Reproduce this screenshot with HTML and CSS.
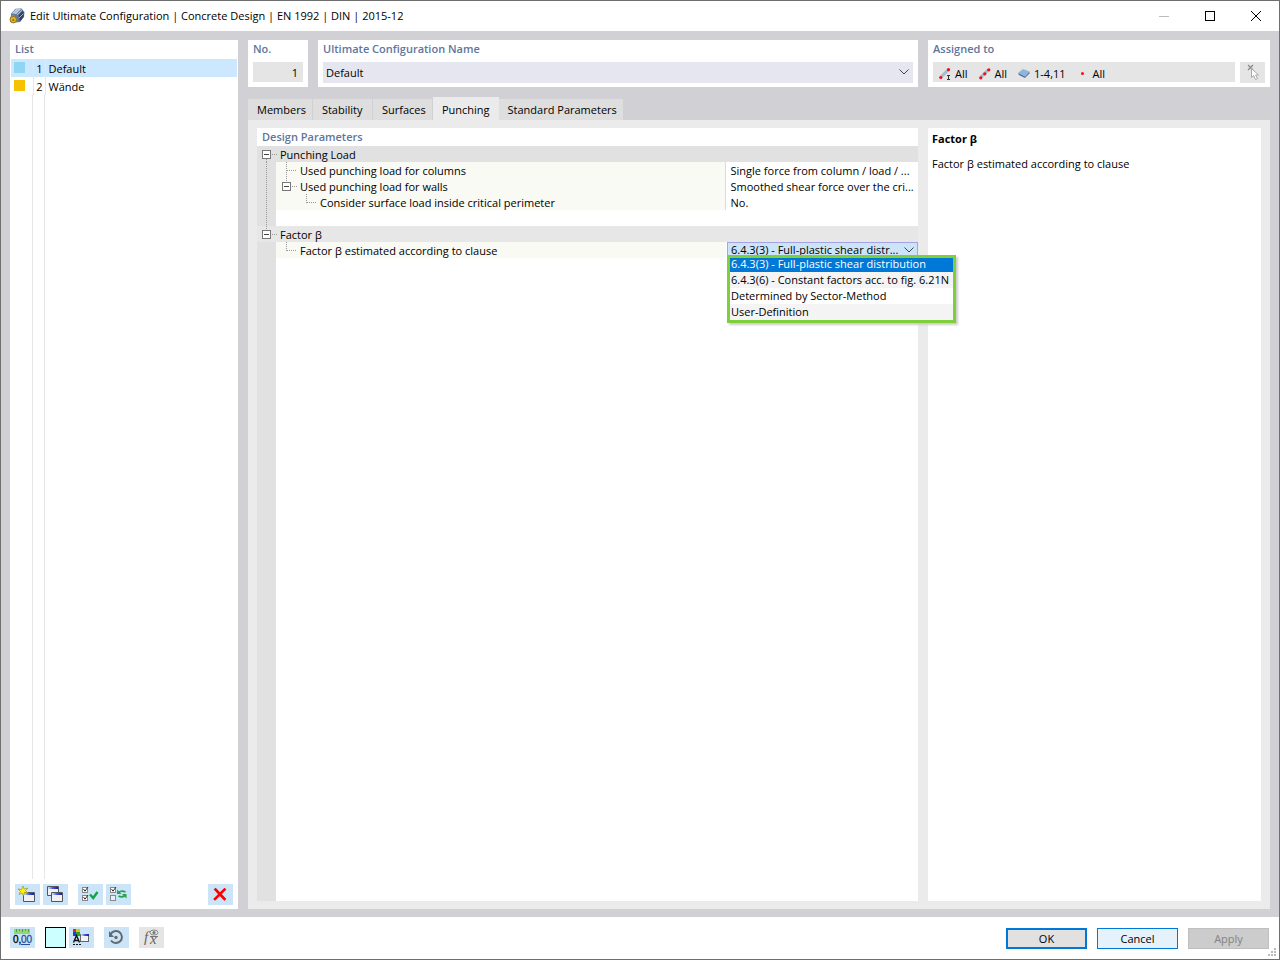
FILE: index.html
```html
<!DOCTYPE html>
<html lang="en">
<head>
<meta charset="utf-8">
<title>Edit Ultimate Configuration</title>
<link rel="stylesheet" href="styles.css">
</head>
<body>
<svg class="defs" width="0" height="0" aria-hidden="true">
  <defs>
    <linearGradient id="bar"><stop offset="0" stop-color="#dfe4f2"/><stop offset=".5" stop-color="#3a55e8"/><stop offset="1" stop-color="#1220a8"/></linearGradient>
    <g id="win">
      <path d="M.5.500h11v9h-11z" fill="#f1f0f2" stroke="#55555a"/>
      <rect x="1" y="1" width="10" height="2" fill="url(#bar)"/>
    </g>
    <g id="check">
      <rect x=".5" y=".5" width="5" height="5" fill="#fff" stroke="#888"/>
      <path d="M1.500 2 3 4.200 6 0" fill="none" stroke="#333"/>
    </g>
    <g id="minus">
      <rect x="5.500" y="4.500" width="8" height="8" fill="#fff" stroke="#777"/>
      <path d="M7 8.500h5" stroke="#444"/>
    </g>
  </defs>
</svg>
<div class="window">
  <header class="titlebar">
    <svg class="app-icon" width="16" height="16" viewBox="0 0 16 16" aria-hidden="true">
      <path d="M2 5.500 6.500.800l6-.3 3 3.500-.5 5-4 5-4 .5L2 9z" fill="#62799f"/>
      <path d="M2.500 5.500 7 1l5.500-.2-5 5.200z" fill="#a9bdd8"/>
      <path d="M9.500 7.500 13.500 3l1.500 2-.5 4-3.500 4.500z" fill="#33415f"/>
      <path d="M4 5l4.500-4M6 6l5-5M8 7l5-5M10 10l4.500-4.500" stroke="#d5e0ee" stroke-width=".7"/>
      <path d="M5.500 8C3 7 1.500 9 1.500 11.500" fill="none" stroke="#b08c18" stroke-width="1.500"/>
      <circle cx="4.300" cy="11.700" r="3.200" fill="#e2b62c" stroke="#94751a"/>
      <circle cx="4.300" cy="12" r="1.100" fill="#8a6c16"/>
    </svg>
    <h1 class="title">Edit Ultimate Configuration | Concrete Design | EN 1992 | DIN | 2015-12</h1>
    <div class="window-controls">
      <button class="window-button" aria-label="Minimize" disabled><svg width="12" height="12"><path d="M1 6.500h10" stroke="#bbb"/></svg></button>
      <button class="window-button" aria-label="Maximize"><svg width="12" height="12"><rect x="1.500" y="1.500" width="9" height="9" fill="none" stroke="#000"/></svg></button>
      <button class="window-button" aria-label="Close"><svg width="12" height="12"><path d="M1 1l10 10M11 1 1 11" stroke="#000"/></svg></button>
    </div>
  </header>

  <main class="workspace">
    <aside class="list-panel">
      <h2 class="caption">List</h2>
      <div class="list-body">
        <table class="list">
          <tr class="selected"><td class="swatch-cell"><span class="swatch blue"></span></td><td class="number">1</td><td class="name">Default</td></tr>
          <tr><td class="swatch-cell"><span class="swatch yellow"></span></td><td class="number">2</td><td class="name">Wände</td></tr>
        </table>
        <div class="list-rules"><span></span><span></span></div>
      </div>
      <div class="list-tools">
        <button class="tool" aria-label="New"><svg width="25" height="21"><use href="#win" x="8" y="8"/><path d="M8 2l1.200 3L13 4 10.500 6.500 13 9 9.500 8.500 8.500 12 7 9 4 10.500 5.500 7.500 3 5l3.500.500z" fill="#fff200" stroke="#8b8430" stroke-width=".6"/></svg></button>
        <button class="tool" aria-label="Copy"><svg width="25" height="21"><use href="#win" x="4" y="2"/><use href="#win" x="8" y="8"/></svg></button>
        <button class="tool gap" aria-label="Select all"><svg width="25" height="21"><use href="#check" x="4" y="3"/><use href="#check" x="4" y="11"/><path d="M12 10.500l3.200 3.500 4.300-6" fill="none" stroke="#14a24b" stroke-width="2.400"/></svg></button>
        <button class="tool" aria-label="Invert selection"><svg width="25" height="21"><use href="#check" x="4" y="3"/><rect x="4.500" y="11.500" width="5" height="5" fill="#e4f0fa" stroke="#888"/><path d="M12.500 8.500q3-2.500 7-.5M19 11.500q-3 2.500-6.500.5" fill="none" stroke="#26a252" stroke-width="1.800"/><path d="M11 5.500v4.500h4.500zM20.500 14.500V10H16z" fill="#26a252"/></svg></button>
        <button class="tool end" aria-label="Delete"><svg width="25" height="21"><path d="M7.500 5.500l9 9.500M16.500 5.500l-9.500 9.500" fill="none" stroke="#f00" stroke-width="2.600" stroke-linecap="square"/></svg></button>
      </div>
    </aside>

    <section class="main">
      <div class="top-cards">
        <div class="card">
          <label class="caption" for="no">No.</label>
          <input class="field number-field" id="no" value="1" readonly>
        </div>
        <div class="card">
          <label class="caption" for="config-name">Ultimate Configuration Name</label>
          <div class="combo">
            <select class="field name-field" id="config-name"><option>Default</option></select>
            <svg class="chevron" width="10" height="6"><path d="M.5.500 5 5 9.500.500" fill="none" stroke="#444"/></svg>
          </div>
        </div>
        <div class="card">
          <h2 class="caption">Assigned to</h2>
          <div class="assigned-row">
            <div class="field assigned">
              <span class="assignment"><svg width="12" height="12"><path d="M1.500 9.500l8-8" stroke="#a5b8d4" stroke-width="3"/><circle cx="1.800" cy="9.500" r="1.600" fill="#e11"/><circle cx="9.500" cy="1.700" r="1.600" fill="#e11"/><path d="M8 7.500h3M8 11.500h3M9.500 8v3" stroke="#333"/></svg>All</span>
              <span class="assignment"><svg width="12" height="12"><path d="M1.500 9.500l8-8" stroke="#a5b8d4" stroke-width="3"/><circle cx="1.800" cy="9.800" r="1.600" fill="#e11"/><circle cx="5.800" cy="5.800" r="1.600" fill="#e11"/><circle cx="9.800" cy="1.800" r="1.600" fill="#e11"/></svg>All</span>
              <span class="assignment"><svg width="12" height="12"><path d="M0 5l5-4 6.500 2.500-4.500 5z" fill="#8db6dc"/><path d="M0 5l7 3.500v1.500L1 7z" fill="#486f9b"/><path d="M7 8.500l4.500-5v2L7 10z" fill="#5580ad"/></svg>1-4,11</span>
              <span class="assignment"><svg width="12" height="12"><circle cx="5.500" cy="5.500" r="1.500" fill="#e11"/></svg>All</span>
            </div>
            <button class="tool off" aria-label="Pick objects" disabled><svg width="25" height="21"><path d="M8 3l5 5M13 3 8 8" stroke="#888" stroke-width="1.200"/><path d="M11.500 6.500v9l2-2 2 4 2-1-2-3.500h3z" fill="#fff" stroke="#aaa"/></svg></button>
          </div>
        </div>
      </div>

      <nav class="tabs" role="tablist">
        <button class="tab" role="tab">Members</button>
        <button class="tab" role="tab">Stability</button>
        <button class="tab" role="tab">Surfaces</button>
        <button class="tab active" role="tab" aria-selected="true">Punching</button>
        <button class="tab" role="tab">Standard Parameters</button>
      </nav>

      <div class="tab-page">
        <section class="parameters">
          <h2 class="caption">Design Parameters</h2>
          <table class="tree">
            <colgroup><col class="gutter-col"><col><col class="value-col"></colgroup>
            <tr class="group">
              <th colspan="3"><div class="node"><svg width="23" height="16"><path class="dots" d="M9.500 13v3M15 8.500h6"/><use href="#minus"/></svg>Punching Load</div></th>
            </tr>
            <tr>
              <td class="gutter"><svg width="19" height="16"><path class="dots" d="M9.500 0v16"/></svg></td>
              <td class="param"><div class="node"><svg width="24" height="16"><path class="dots" d="M10.500 0v16M11 8.500h10"/></svg>Used punching load for columns</div></td>
              <td class="value"><div class="node">Single force from column / load / ...</div></td>
            </tr>
            <tr>
              <td class="gutter"><svg width="19" height="16"><path class="dots" d="M9.500 0v16"/></svg></td>
              <td class="param"><div class="node"><svg width="24" height="16"><path class="dots" d="M10.500 0v4M16 8.500h5"/><use href="#minus" x="1"/></svg>Used punching load for walls</div></td>
              <td class="value"><div class="node">Smoothed shear force over the cri...</div></td>
            </tr>
            <tr>
              <td class="gutter"><svg width="19" height="16"><path class="dots" d="M9.500 0v16"/></svg></td>
              <td class="param"><div class="node"><svg width="44" height="16"><path class="dots" d="M30.500 0v9M31 8.500h10"/></svg>Consider surface load inside critical perimeter</div></td>
              <td class="value"><div class="node">No.</div></td>
            </tr>
            <tr>
              <td class="gutter"><svg width="19" height="16"><path class="dots" d="M9.500 0v16"/></svg></td>
              <td colspan="2"></td>
            </tr>
            <tr class="group light">
              <th colspan="3"><div class="node"><svg width="23" height="16"><path class="dots" d="M9.500 0v4M15 8.500h6"/><use href="#minus"/></svg>Factor β</div></th>
            </tr>
            <tr>
              <td class="gutter"></td>
              <td class="param"><div class="node"><svg width="24" height="16"><path class="dots" d="M10.500 0v9M11 8.500h10"/></svg><label for="clause">Factor β estimated according to clause</label></div></td>
              <td class="value-edit">
                <div class="combo">
                  <select class="clause-field" id="clause"><option>6.4.3(3) - Full-plastic shear distr...</option></select>
                  <svg class="chevron" width="10" height="6"><path d="M.5.500 5 5 9.500.500" fill="none" stroke="#444"/></svg>
                  <ul class="menu" role="listbox">
                    <li class="chosen" role="option" aria-selected="true">6.4.3(3) - Full-plastic shear distribution</li>
                    <li role="option">6.4.3(6) - Constant factors acc. to fig. 6.21N</li>
                    <li role="option">Determined by Sector-Method</li>
                    <li role="option">User-Definition</li>
                  </ul>
                </div>
              </td>
            </tr>
          </table>
          <div class="tree-rest"></div>
        </section>
        <section class="help">
          <h2 class="help-title">Factor β</h2>
          <p class="help-text">Factor β estimated according to clause</p>
        </section>
      </div>
    </section>
  </main>

  <footer class="footer">
    <div class="footer-tools">
      <button class="tool" aria-label="Units and decimals"><svg width="25" height="21"><rect x="4" y="2" width="16" height="5" fill="#8ed973"/><path d="M6.500 2v3M9.500 2v2M12.500 2v3M15.500 2v2M18.500 2v3" stroke="#5ca344"/><path d="M11 17.500h9" stroke="#2450a0"/><text class="digits" x="3" y="16">0,</text><text class="digits blue-digits" x="11" y="16">00</text></svg></button>
      <button class="color-button" aria-label="Colour"></button>
      <button class="tool close-by" aria-label="Display properties"><svg width="25" height="21"><rect x="4" y="2" width="3" height="3" fill="#e22"/><rect x="7" y="2" width="4" height="3" fill="#d7c800"/><rect x="4" y="5" width="3" height="4" fill="#1b41dd"/><rect x="7" y="5" width="4" height="4" fill="#28a428"/><path d="M4.500 15.500 7.500 8.500l3 7M5.500 13.500h4" fill="none" stroke="#111" stroke-width="1.400"/><path d="M4 17.500h8" stroke="#111" stroke-dasharray="2 1"/><rect x="11.500" y="7.500" width="8" height="7" fill="#f4f2f4" stroke="#666"/><rect x="12" y="7" width="8" height="2" fill="url(#bar)"/></svg></button>
      <button class="tool" aria-label="Reset"><svg width="25" height="21"><path d="M6.500 7.500a6 6 0 1 1 .5 6" fill="none" stroke="#626a72" stroke-width="2"/><path d="M5 4v6h5z" fill="#626a72"/><circle cx="12" cy="10.500" r="1.700" fill="#626a72"/></svg></button>
      <button class="tool off" aria-label="Formula" disabled><svg width="25" height="21"><text class="formula" x="5" y="15">f</text><text class="formula" x="11" y="17">x</text><ellipse cx="15" cy="5.500" rx="4" ry="2.500" fill="none" stroke="#888"/><circle cx="15" cy="5.500" r="1.500" fill="#777"/><path d="M11 9.500h8" stroke="#777"/></svg></button>
    </div>
    <div class="dialog-buttons">
      <button class="push primary">OK</button>
      <button class="push hot">Cancel</button>
      <button class="push" disabled>Apply</button>
    </div>
    <svg class="grip" width="9" height="9" aria-hidden="true"><path d="M6 1h2M3 4h2M6 4h2M0 7h2M3 7h2M6 7h2" stroke="#bbb" stroke-width="2"/></svg>
  </footer>
</div>
</body>
</html>
```
FILE: styles.css
```css
* { box-sizing: border-box; }
body {
  margin: 0;
  font: 11px/16px "Open Sans", "Noto Sans", sans-serif;
  color: #000;
}
h1, h2, p, ul { margin: 0; padding: 0; }
button, input, select { font: inherit; color: inherit; margin: 0; padding: 0; border: 0; border-radius: 0; }
svg { display: block; flex: none; }
.defs { position: absolute; }
table { border-collapse: collapse; }
td, th { padding: 0; text-align: left; font-weight: 400; }

.window {
  display: flex;
  flex-direction: column;
  min-height: 100vh;
  border: 1px solid #6e6e6e;
  background: #fff;
}

.titlebar { display: flex; align-items: center; height: 30px; padding-left: 8px; }
.title { margin-left: 5px; font-size: 11px; font-weight: 400; }
.window-controls { display: flex; margin-left: auto; }
.window-button {
  display: flex;
  align-items: center;
  justify-content: center;
  width: 46px;
  height: 28px;
  background: none;
}

.workspace {
  flex: 1;
  display: flex;
  gap: 10px;
  padding: 9px 9px 8px;
  background: #d1d0d5;
}
.caption {
  display: block;
  height: 18px;
  padding-left: 5px;
  font-size: 11px;
  line-height: 18px;
  font-weight: 600;
  color: #61759c;
}

.list-panel { display: flex; flex-direction: column; width: 228px; background: #fff; }
.list-panel .caption { height: 19px; }
.list-body { flex: 1; display: flex; flex-direction: column; margin: 0 1px; }
.list { width: 100%; }
.list tr { height: 18px; }
.list td { padding-top: 2px; }
.list .selected { background: #cce8ff; }
.swatch-cell { width: 22px; padding-left: 3px; border-right: 1px solid #e6e6e6; }
.swatch { display: block; width: 11px; height: 11px; margin-top: -4px; }
.blue { background: #8fd6f5; }
.yellow { background: #f6c200; }
.number { width: 12px; padding-right: 2px; border-right: 1px solid #e6e6e6; text-align: right; }
.name { padding-left: 3px; }
.list-rules { flex: 1; display: flex; }
.list-rules span { width: 22px; border-right: 1px solid #e6e6e6; }
.list-rules span + span { width: 12px; }
.list-tools { display: flex; gap: 3px; padding: 5px 5px 4px; }

.tool {
  display: flex;
  flex: none;
  width: 25px;
  height: 21px;
  background: #cce4f7;
}
.gap { margin-left: 7px; }
.end { margin-left: auto; }
.off { background: #e5e5e5; }

.main { flex: 1; display: flex; flex-direction: column; min-width: 0; }
.top-cards { display: grid; grid-template-columns: 60px 600fr 342fr; gap: 10px; height: 47px; }
.card { background: #fff; padding-right: 5px; }
.field { display: block; height: 20px; margin: 4px 0 0 5px; background: #e5e5e5; }
.number-field { width: 50px; padding-right: 5px; text-align: right; }
.combo { position: relative; }
select { appearance: none; display: block; outline: 0; }
.combo .name-field { width: calc(100% - 5px); height: 21px; padding-left: 3px; background: #e6e6f1; }
.chevron { position: absolute; right: 4px; top: 7px; pointer-events: none; }
.assigned-row { display: flex; gap: 5px; }
.assigned-row .tool { margin-top: 4px; }
.assigned { flex: 1; display: flex; align-items: center; gap: 11px; padding: 3px 0 0 6px; }
.assignment { display: flex; align-items: center; gap: 4px; }

.tabs { display: flex; align-items: flex-end; height: 24px; margin-top: 9px; }
.tab {
  min-width: 60px;
  height: 21px;
  padding: 0 6px 0 9px;
  border-right: 1px solid #d1d0d5;
  background: #dedede;
  text-align: left;
}
.tab:last-child { border-right: 0; }
.tab.active { height: 23px; padding: 2px 9px 0; border: 0; background: #ebebeb; }
.tab-page {
  flex: 1;
  display: grid;
  grid-template-columns: 661fr 333fr;
  gap: 10px;
  padding: 8px 9px;
  background: #ebebeb;
}
.parameters { display: flex; flex-direction: column; min-width: 0; background: #fff; }
.help { padding: 3px 4px; background: #fff; }
.help-title { font-size: 11px; font-weight: 700; }
.help-text { margin-top: 9px; }

.tree { width: 100%; table-layout: fixed; }
.gutter-col { width: 19px; }
.value-col { width: 192px; }
.tree tr { height: 16px; }
.group { background: #e1e1e1; }
.light { background: #e7e7e7; }
.gutter { background: #e1e1e1; }
.param { background: #f9faf4; }
.node { display: flex; height: 16px; line-height: 18px; white-space: nowrap; }
.dots { fill: none; stroke: #999; stroke-dasharray: 1 1; }
.value { padding-left: 4px; border-left: 1px solid #dcdcdc; }
.value-edit { padding-left: 1px; vertical-align: top; }
.clause-field {
  width: 100%;
  height: 16px;
  padding-left: 3px;
  border: 1px solid #a3a3e6;
  background: #cce4f7;
  line-height: 14px;
}
.clause-field + .chevron { top: 5px; }
.menu {
  position: absolute;
  left: 0;
  top: 13px;
  z-index: 1;
  border: 3px solid #7ed03a;
  background: #fff;
  box-shadow: 2px 2px 2px #ccc;
  list-style: none;
  white-space: nowrap;
}
.menu li { height: 16px; padding: 0 4px 0 1px; }
.menu li:nth-child(even) { background: #f4f4f4; }
.menu .chosen { height: 14px; line-height: 12px; background: #0078d7; color: #fff; }
.tree-rest { flex: 1; border-left: 19px solid #e1e1e1; }

.footer { position: relative; display: flex; justify-content: space-between; height: 42px; padding: 10px 10px 0 9px; }
.footer-tools { display: flex; gap: 10px; }
.color-button { width: 21px; height: 21px; border: 1px solid #000; background: #ccffff; }
.close-by { margin-left: -7px; }
.digits { font: 10px "Liberation Sans", sans-serif; stroke: #000; stroke-width: .3px; }
.blue-digits { fill: #2450a0; stroke: #2450a0; }
.formula { font: italic 15px "Liberation Serif", serif; fill: #666; }
.dialog-buttons { display: flex; gap: 10px; padding-top: 1px; }
.push { width: 81px; height: 21px; border: 1px solid #bfbfbf; background: #ccc; }
.push:disabled { color: #838383; }
.primary { border: 2px solid #0078d7; background: #e1e1e1; }
.hot { border-color: #0078d7; background: #e5f1fb; }
.grip { position: absolute; right: 2px; bottom: 2px; }
```
